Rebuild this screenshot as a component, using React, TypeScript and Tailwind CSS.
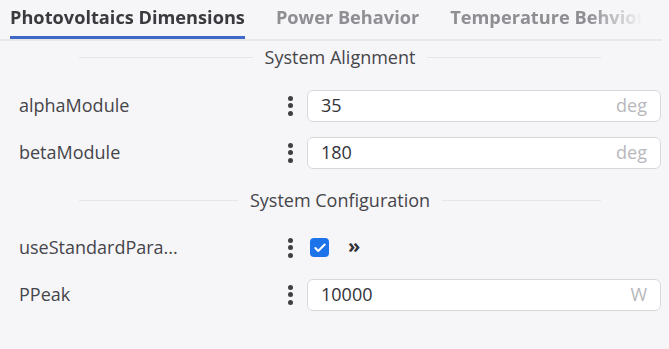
import { Check } from 'lucide-react';

interface Field {
  label: string;
  kind: 'number' | 'toggle';
  value?: string;
  unit?: string;
}

const tabs = ['Photovoltaics Dimensions', 'Power Behavior', 'Temperature Behvior'];

const sections: { title: string; fields: Field[] }[] = [
  {
    title: 'System Alignment',
    fields: [
      { label: 'alphaModule', kind: 'number', value: '35', unit: 'deg' },
      { label: 'betaModule', kind: 'number', value: '180', unit: 'deg' },
    ],
  },
  {
    title: 'System Configuration',
    fields: [
      { label: 'useStandardPara...', kind: 'toggle' },
      { label: 'PPeak', kind: 'number', value: '10000', unit: 'W' },
    ],
  },
];

function Kebab() {
  return (
    <div className="flex w-[16px] flex-col items-center gap-[2.5px] text-[#3f3f44]">
      <span className="h-[5px] w-[5px] rounded-full bg-current" />
      <span className="h-[5px] w-[5px] rounded-full bg-current" />
      <span className="h-[5px] w-[5px] rounded-full bg-current" />
    </div>
  );
}

function SectionTitle({ title }: { title: string }) {
  return (
    <div className="mx-[60px] flex h-[34px] items-center gap-3">
      <div className="h-px flex-1 bg-[#e6e6e9]" />
      <span className="text-[18px] text-[#45454a]">{title}</span>
      <div className="h-px flex-1 bg-[#e6e6e9]" />
    </div>
  );
}

function FieldRow({ field }: { field: Field }) {
  return (
    <div className="flex h-[47px] items-center">
      <div className="flex-1 truncate text-[18px] text-[#45454a]">{field.label}</div>
      <Kebab />
      {field.kind === 'number' ? (
        <div className="ml-[9px] flex h-[32px] w-[354px] items-center justify-between rounded-[6px] border border-[#d8d8dc] bg-white pl-[13px] pr-[13px]">
          <span className="text-[18px] text-[#333338]">{field.value}</span>
          <span className="text-[18px] text-[#b8b8bc]">{field.unit}</span>
        </div>
      ) : (
        <div className="ml-[12px] flex w-[351px] items-center gap-[19px]">
          <span className="flex h-[19px] w-[19px] items-center justify-center rounded-[4px] bg-[#1d74ea]">
            <Check className="h-[14px] w-[14px] text-white" strokeWidth={3.5} />
          </span>
          <span className="-mt-[3px] text-[20px] font-bold text-[#333338]">»</span>
        </div>
      )}
    </div>
  );
}

export default function App() {
  return (
    <div className="h-[349px] w-[669px] bg-[#f6f6f8] font-['Open_Sans',sans-serif]">
      <div className="w-[662px] border-b-2 border-[#e8e8eb]">
        <div className="flex h-[39px] items-end gap-[31px] pl-[10px] [mask-image:linear-gradient(to_right,black_89%,transparent_97%)]">
          {tabs.map((tab, i) => (
            <div
              key={tab}
              className={
                i === 0
                  ? 'border-b-[3px] border-[#3f67c8] pb-[5px] text-[18.2px] font-bold text-[#3a3a3f]'
                  : 'pb-[8px] text-[18.2px] font-bold text-[#8e8e93]'
              }
            >
              {tab}
            </div>
          ))}
        </div>
      </div>

      <div className="pl-[19px] pr-[8px]">
        <div className="-mt-[1px]">
          <SectionTitle title={sections[0].title} />
        </div>
        <div className="pt-[8px]">
          {sections[0].fields.map((f) => (
            <FieldRow key={f.label} field={f} />
          ))}
        </div>
        <div className="mt-[7px]">
          <SectionTitle title={sections[1].title} />
        </div>
        <div className="pt-[7px]">
          {sections[1].fields.map((f) => (
            <FieldRow key={f.label} field={f} />
          ))}
        </div>
      </div>
    </div>
  );
}
